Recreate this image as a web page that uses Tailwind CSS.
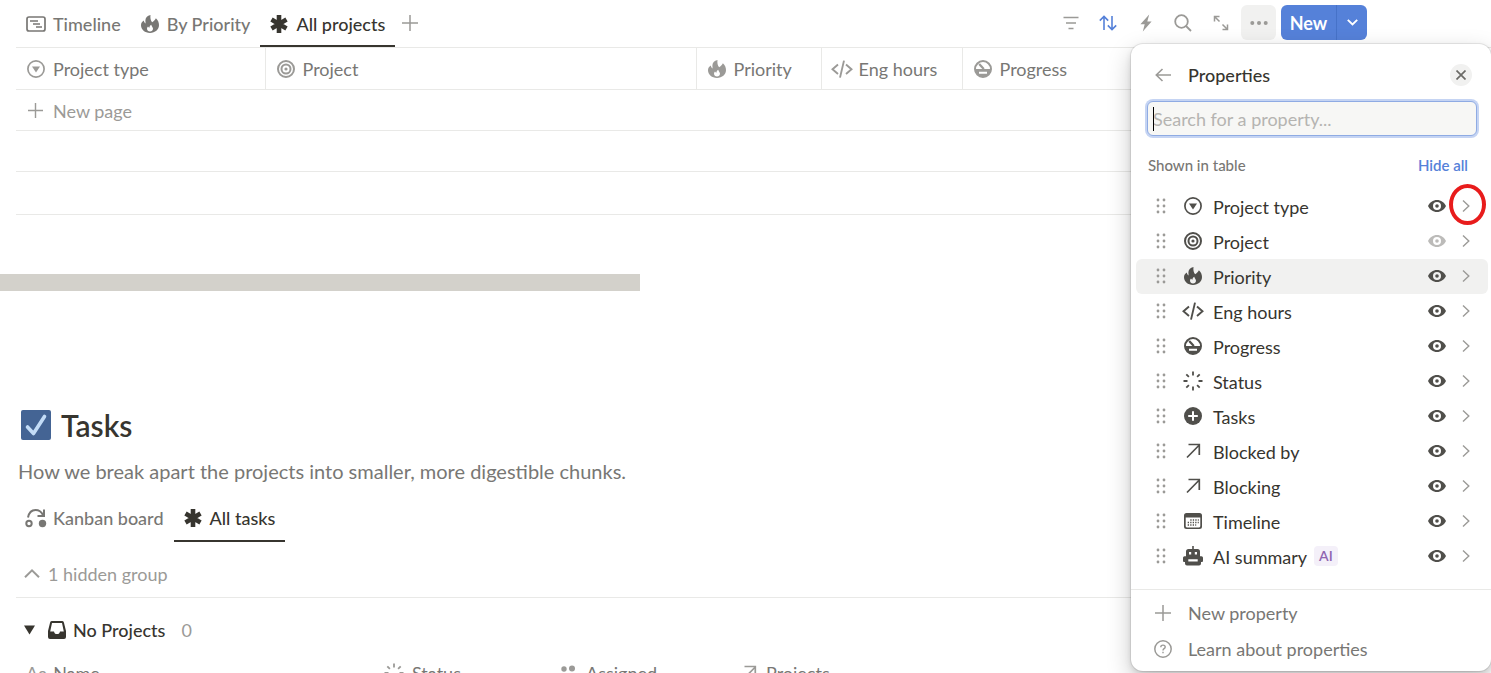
<!DOCTYPE html>
<html lang="en">
<head>
  <meta charset="UTF-8">
  <meta name="viewport" content="width=device-width, initial-scale=1.0">
  <title>Projects &amp; Tasks</title>
  <script src="https://cdn.jsdelivr.net/npm/@tailwindcss/browser@4"></script>
</head>
<body class="h-screen overflow-hidden bg-white font-['Lato',sans-serif] text-lg leading-6 text-[#37352f]">

  <!-- Icon set -->
  <svg class="hidden" aria-hidden="true">
    <symbol id="i-board" viewBox="0 0 20 18"><rect x="1" y="2" width="18" height="14" rx="2" fill="none" stroke="currentColor" stroke-width="1.700"/><path d="M4 6h8M7 9h7M10 12h6" fill="none" stroke="currentColor" stroke-width="1.400"/></symbol>
    <symbol id="i-fire" viewBox="0 0 18 18"><path fill="currentColor" fill-rule="evenodd" d="M9.500 0C6.200.6 4.300 2.800 4.400 5.600L4.600 8.600C3.600 8 3 7 2.800 5.600 1 6.700 0 8.300 0 10.300 0 14.700 3.900 18 9 18s9-3.300 9-7.900c0-2.800-1.100-5.200-3.100-6.900C14 4.800 12.700 6.300 11.100 7.200 9.600 5.300 9.100 2.700 9.500 0zM9 16.500c-1.700 0-3-1.100-3-2.700 0-1 .4-1.700 1-2.300.3.700.8 1.100 1.400 1.300.1-1.500.7-2.600 1.900-3.100.1 1.600 1.700 2.300 1.700 4.100 0 1.600-1.300 2.700-3 2.700z"/></symbol>
    <symbol id="i-asterisk" viewBox="0 0 18 18"><path d="M9 0v18M1.500 4.600l15 8.800M16.500 4.600l-15 8.800" fill="none" stroke="currentColor" stroke-width="4.600"/></symbol>
    <symbol id="i-plus" viewBox="0 0 18 18"><path d="M9 0v18M0 9h18" fill="none" stroke="currentColor" stroke-width="1.700"/></symbol>
    <symbol id="i-select" viewBox="0 0 18 18"><circle cx="9" cy="9" r="8.100" fill="none" stroke="currentColor" stroke-width="1.700"/><path d="M5 6.600h8L9 12.600z" fill="currentColor"/></symbol>
    <symbol id="i-target" viewBox="0 0 18 18"><g fill="none" stroke="currentColor" stroke-width="2"><circle cx="9" cy="9" r="8"/><circle cx="9" cy="9" r="4.500"/></g><circle cx="9" cy="9" r="1.600" fill="currentColor"/></symbol>
    <symbol id="i-code" viewBox="0 0 22 18"><path d="M7 4.500L1.500 9.300 7 14M15 4.500l5.500 4.800L15 14M13 .6L9 17.600" fill="none" stroke="currentColor" stroke-width="1.900"/></symbol>
    <symbol id="i-gauge" viewBox="0 0 18 18"><path fill="currentColor" fill-rule="evenodd" d="M9 0a9 9 0 1 0 0 18A9 9 0 0 0 9 0zM2 9.100a7 7 0 0 1 14 0zM5 11.800h8v2H5z"/><path d="M5.200 4l4.600 5.100" stroke="currentColor" stroke-width="2.200"/></symbol>
    <symbol id="i-status" viewBox="0 0 20 20"><path d="M10 .5v4M10 15.500v4M.5 10h4M15.500 10h4M3.300 3.300l2.600 2.600M14.100 14.100l2.600 2.600M16.700 3.300l-2.600 2.600M5.900 14.100l-2.600 2.600" fill="none" stroke="currentColor" stroke-width="1.800"/></symbol>
    <symbol id="i-add" viewBox="0 0 18 18"><circle cx="9" cy="9" r="9" fill="currentColor"/><path d="M9 4.200v9.600M4.200 9h9.600" stroke="white" stroke-width="2"/></symbol>
    <symbol id="i-arrow" viewBox="0 0 18 18"><path d="M3 15.500L14.800 3.500M4.500 2.500h10.800V13" fill="none" stroke="currentColor" stroke-width="1.700"/></symbol>
    <symbol id="i-calendar" viewBox="0 0 18 18"><path fill="currentColor" fill-rule="evenodd" d="M2.500 1h13A2.500 2.500 0 0 1 18 3.500v11a2.500 2.500 0 0 1-2.500 2.500h-13A2.500 2.500 0 0 1 0 14.500v-11A2.500 2.500 0 0 1 2.500 1zM1.700 5.600v8.400c0 .9.500 1.400 1.300 1.400h12c.8 0 1.300-.5 1.300-1.400V5.600z"/><path d="M6.300 8h8.500M3.700 10.500h11.100M3.700 13h8.500" stroke="currentColor" stroke-width="1.300" stroke-dasharray="1.300 1.200"/></symbol>
    <symbol id="i-robot" viewBox="0 0 20 20"><path fill="currentColor" fill-rule="evenodd" d="M9.200 0h1.600v3h3.700A2.500 2.500 0 0 1 17 5.500V10.300h1.500A1.500 1.500 0 0 1 20 11.800V15a1 1 0 0 1-1 1h-1v1.500a2 2 0 0 1-2 2H4a2 2 0 0 1-2-2V16H1a1 1 0 0 1-1-1v-3.200a1.500 1.500 0 0 1 1.500-1.500H3V5.500A2.500 2.500 0 0 1 5.500 3h3.700zM6 6v2.400h2.200V6zM11.800 6v2.400H14V6zM5.300 13.200v2.400h9.400v-2.400z"/></symbol>
    <symbol id="i-grip" viewBox="0 0 10 16"><g fill="currentColor"><circle cx="2" cy="2" r="1.400"/><circle cx="8" cy="2" r="1.400"/><circle cx="2" cy="8" r="1.400"/><circle cx="8" cy="8" r="1.400"/><circle cx="2" cy="14" r="1.400"/><circle cx="8" cy="14" r="1.400"/></g></symbol>
    <symbol id="i-eye" viewBox="0 0 18 12"><path fill="currentColor" fill-rule="evenodd" d="M9 0c4 0 7.300 2.400 9 6-1.700 3.600-5 6-9 6S1.700 9.600 0 6c1.700-3.600 5-6 9-6zm0 2a4 4 0 1 0 0 8 4 4 0 0 0 0-8z"/><circle cx="9" cy="6" r="1.800" fill="currentColor"/></symbol>
    <symbol id="i-chevron" viewBox="0 0 8 12"><path d="M1 .6L6.800 6 1 11.400" fill="none" stroke="currentColor" stroke-width="1.400"/></symbol>
    <symbol id="i-kanban" viewBox="0 0 22 20"><g fill="none" stroke="currentColor" stroke-width="2"><circle cx="4" cy="15.500" r="2.700"/><path d="M3 9.500C4 4.500 7 2 10.500 2c3.500 0 6 1.800 7.500 5M19 1.500V8h-6.500"/></g><circle cx="17.500" cy="15.500" r="3.700" fill="currentColor"/></symbol>
    <symbol id="i-inbox" viewBox="0 0 18 18"><path fill="currentColor" fill-rule="evenodd" d="M4 0h10a2 2 0 0 1 1.900 1.400L18 10v6a2 2 0 0 1-2 2H2a2 2 0 0 1-2-2v-6L2.100 1.400A2 2 0 0 1 4 0zM4 2L2.200 10.400H6c.2 1.600 1.300 2.700 3 2.700s2.800-1.100 3-2.700h3.800L14 2z"/></symbol>
    <symbol id="i-people" viewBox="0 0 16 16"><g fill="currentColor"><circle cx="4" cy="4" r="2.700"/><circle cx="12" cy="3.500" r="3"/><path d="M0 13c0-3 1.600-5 4-5s3 1 4 1 1.600-1 4-1 4 2 4 5z"/></g></symbol>
  </svg>

  <main class="pl-4">
    <!-- Projects: view tabs and toolbar -->
    <div class="flex h-12 items-stretch border-b border-[#e9e9e7] pr-31">
      <nav class="flex font-medium text-[#787774]">
        <a href="#" class="flex h-[47px] items-center gap-[7px] px-[10px]"><svg class="h-[18px] w-5"><use href="#i-board"/></svg>Timeline</a>
        <a href="#" class="flex h-[47px] items-center gap-2 px-[10px]"><svg class="size-[18px]"><use href="#i-fire"/></svg>By Priority</a>
        <a href="#" class="flex h-[47px] items-center gap-2 border-b-2 border-[#37352f] px-[10px] pt-[2px] text-[#37352f]"><svg class="size-[18px]"><use href="#i-asterisk"/></svg>All projects</a>
        <button class="flex h-[45px] items-center pl-[7px] text-[#9b9a97]" aria-label="Add view"><svg class="size-4"><use href="#i-plus"/></svg></button>
      </nav>
      <div class="ml-auto flex h-[45px] items-center text-[#9b9a97]">
        <button class="mr-5 flex" aria-label="Filter"><svg class="size-4" viewBox="0 0 16 16" fill="none" stroke="currentColor" stroke-width="1.700"><path d="M.5 2.500h15M3 8h10M5.500 13.500h5"/></svg></button>
        <button class="mr-[23px] flex text-[#5581d9]" aria-label="Sort"><svg class="h-4 w-[18px]" viewBox="0 0 18 16" fill="none" stroke="currentColor" stroke-width="1.600"><path d="M5 15V1.500M.8 5.600L5 1.400l4.200 4.200M13 1v13.500M8.800 10.400L13 14.600l4.200-4.200"/></svg></button>
        <button class="mr-[22px] flex" aria-label="Automations"><svg class="h-[18px] w-3" viewBox="0 0 12 18" fill="currentColor"><path d="M9.200.5L.4 10.300h4.300L2.800 17.500 11.600 7.500H7.300z"/></svg></button>
        <button class="mr-[21px] flex" aria-label="Search"><svg class="size-[18px]" viewBox="0 0 18 18" fill="none" stroke="currentColor" stroke-width="1.800"><circle cx="7.500" cy="7.500" r="6.300"/><path d="M12 12l5 5"/></svg></button>
        <button class="mr-3 flex" aria-label="Expand"><svg class="size-4" viewBox="0 0 16 16" fill="none" stroke="currentColor" stroke-width="1.500"><path d="M1.500 6.500v-5h5M1.500 1.500L6.500 6.500M14.500 9.500v5h-5M14.500 14.500L9.500 9.500"/></svg></button>
        <button class="mr-[5px] flex size-[35px] items-center justify-center rounded-md bg-[#f1f1f0]" aria-label="More"><svg class="h-1 w-[18px]" viewBox="0 0 18 4" fill="currentColor"><circle cx="2.300" cy="2" r="2"/><circle cx="9" cy="2" r="2"/><circle cx="15.700" cy="2" r="2"/></svg></button>
        <div class="flex h-[35px] overflow-hidden rounded-md bg-[#5581d9] font-bold text-white">
          <button class="w-14 border-r border-[#4672c8]">New</button>
          <button class="flex w-[30px] items-center justify-center" aria-label="New options"><svg class="h-[7px] w-[11px]" viewBox="0 0 11 7" fill="none" stroke="currentColor" stroke-width="1.900"><path d="M.8.8l4.700 4.700L10.200.8"/></svg></button>
        </div>
      </div>
    </div>

    <table class="w-full table-fixed border-collapse text-left text-[#787774]">
      <thead>
        <tr class="h-[41px] border-b border-[#e9e9e7]">
          <th class="w-[249px] border-r border-[#e9e9e7] pt-[2px] pl-[11px] font-normal"><div class="flex items-center gap-2"><svg class="size-[18px] text-[#9b9a97]"><use href="#i-select"/></svg>Project type</div></th>
          <th class="w-[431px] border-r border-[#e9e9e7] pt-[2px] pl-[11px] font-normal"><div class="flex items-center gap-2"><svg class="size-[18px] text-[#9b9a97]"><use href="#i-target"/></svg>Project</div></th>
          <th class="w-[125px] border-r border-[#e9e9e7] pt-[2px] pl-[11px] font-normal"><div class="flex items-center gap-2"><svg class="size-[18px] text-[#9b9a97]"><use href="#i-fire"/></svg>Priority</div></th>
          <th class="w-[141px] border-r border-[#e9e9e7] pt-[2px] pl-[9px] font-normal"><div class="flex items-center gap-[6px]"><svg class="h-[18px] w-[22px] text-[#9b9a97]"><use href="#i-code"/></svg>Eng hours</div></th>
          <th class="pt-[2px] pl-[11px] font-normal"><div class="flex items-center gap-2"><svg class="size-[18px] text-[#9b9a97]"><use href="#i-gauge"/></svg>Progress</div></th>
        </tr>
      </thead>
      <tbody>
        <tr class="h-[41px] border-b border-[#e9e9e7]"><td colspan="5" class="pt-[2px] pl-3"><button class="flex items-center gap-[10px] text-[#9b9a97]"><svg class="size-[15px]"><use href="#i-plus"/></svg>New page</button></td></tr>
        <tr class="h-[41px] border-b border-[#e9e9e7]"><td colspan="5"></td></tr>
        <tr class="h-[43px] border-b border-[#e9e9e7]"><td colspan="5"></td></tr>
      </tbody>
    </table>

    <!-- Horizontal scroll thumb -->
    <div class="mt-[59px] -ml-4 h-[17px] w-[640px] bg-[#d3d1cb]"></div>

    <!-- Tasks -->
    <section class="mt-[116px]">
      <h2 class="flex items-center gap-[10px] pl-[5px] text-[30px] leading-9 font-semibold">
        <svg class="size-[30px]" viewBox="0 0 30 30"><rect width="30" height="30" rx="2" fill="#446494"/><path d="M6.500 17l6 6.500L23.500 6.500" fill="none" stroke="#c3dcf7" stroke-width="3.600" stroke-linecap="round" stroke-linejoin="round"/></svg>
        Tasks
      </h2>
      <p class="mt-4 pl-[2px] text-xl leading-6 text-[#787774]">How we break apart the projects into smaller, more digestible chunks.</p>

      <nav class="mt-3 flex font-medium text-[#787774]">
        <a href="#" class="flex h-[47px] items-center gap-[6px] pr-[10px] pl-[9px]"><svg class="h-5 w-[22px]"><use href="#i-kanban"/></svg>Kanban board</a>
        <a href="#" class="flex h-[47px] items-center gap-2 border-b-2 border-[#37352f] px-[10px] pt-[2px] text-[#37352f]"><svg class="size-[18px]"><use href="#i-asterisk"/></svg>All tasks</a>
      </nav>

      <button class="mt-5 flex items-center gap-2 pl-2 text-[#9b9a97]"><svg class="h-[9px] w-4" viewBox="0 0 16 9" fill="none" stroke="currentColor" stroke-width="2"><path d="M1 8.200L8 1.400l7 6.800"/></svg>1 hidden group</button>

      <div class="mt-[11px] flex items-center border-t border-[#e9e9e7] pt-5 pl-2">
        <button class="mr-[13px] flex" aria-label="Collapse group"><svg class="h-[10px] w-[11px]" viewBox="0 0 11 10"><path d="M0 .5h11L5.500 9.500z" fill="currentColor"/></svg></button>
        <svg class="mr-[7px] size-[18px]"><use href="#i-inbox"/></svg>
        <span class="font-medium">No Projects</span>
        <span class="ml-4 text-[#9b9a97]">0</span>
      </div>

      <table class="mt-[11px] w-full table-fixed text-left text-[#787774]">
        <thead>
          <tr class="h-[41px]">
            <th class="w-[358px] pl-[10px] font-normal"><div class="flex items-center gap-[6px]"><span class="text-[#9b9a97]">Aa</span>Name</div></th>
            <th class="w-[175px] pl-[10px] font-normal"><div class="flex items-center gap-2"><svg class="size-5 text-[#9b9a97]"><use href="#i-status"/></svg>Status</div></th>
            <th class="w-[182px] pl-[11px] font-normal"><div class="flex items-center gap-[10px]"><svg class="size-4 text-[#9b9a97]"><use href="#i-people"/></svg>Assigned</div></th>
            <th class="pl-[9px] font-normal"><div class="flex items-center gap-2"><svg class="size-[18px] text-[#9b9a97]"><use href="#i-arrow"/></svg>Projects</div></th>
          </tr>
        </thead>
      </table>
    </section>
  </main>

  <!-- Properties menu -->
  <aside class="absolute top-11 right-0 w-[360px] rounded-xl bg-white shadow-[0_0_0_1px_rgba(15,15,15,0.08),0_3px_6px_rgba(15,15,15,0.12),0_9px_24px_rgba(15,15,15,0.22)]">
    <header class="flex items-center pt-[19px] pr-[19px] pl-6">
      <button class="flex text-[#9b9a97]" aria-label="Back"><svg class="h-[14px] w-4" viewBox="0 0 16 14" fill="none" stroke="currentColor" stroke-width="1.600"><path d="M16 7H1.500M7.500 1L1.300 7l6.200 6"/></svg></button>
      <h3 class="ml-[17px] font-medium">Properties</h3>
      <button class="ml-auto flex size-[22px] items-center justify-center rounded-full bg-[#f1f1f0] text-[#6b6a66]" aria-label="Close"><svg class="size-[10px]" viewBox="0 0 10 10" fill="none" stroke="currentColor" stroke-width="1.700"><path d="M.5.500l9 9M9.500.500l-9 9"/></svg></button>
    </header>
    <div class="relative mr-[14px] ml-4 mt-[14px]">
      <input type="text" aria-label="Search for a property" placeholder="Search for a property..." class="h-[35px] w-full rounded-md border border-[#8fabe3] bg-[#f7f7f5] px-[5px] shadow-[0_0_0_2px_#c5d4f3] outline-none placeholder:text-[#b5b4b1]">
      <span class="absolute top-[6px] left-[6px] h-6 w-px bg-black"></span>
    </div>
    <div class="mt-[17px] flex items-center justify-between pr-[23px] pl-[17px] text-[15px] font-medium text-[#787774]">
      <span>Shown in table</span>
      <button class="font-semibold text-[#5581d9]">Hide all</button>
    </div>
    <ul id="properties" class="mt-3 pr-[3px] pl-[5px]"></ul>
    <footer class="mt-[15px] border-t border-[#e9e9e7] pt-[5px] pb-1 pl-6 text-[#787774]">
      <button class="flex h-9 items-center gap-[17px]"><svg class="size-4 text-[#9b9a97]"><use href="#i-plus"/></svg>New property</button>
      <a href="#" class="-ml-px flex h-9 items-center gap-4"><svg class="size-[18px] text-[#9b9a97]" viewBox="0 0 18 18" fill="none" stroke="currentColor"><circle cx="9" cy="9" r="8.200" stroke-width="1.500"/><path d="M6.800 7.200c0-1.300.9-2.100 2.200-2.100s2.200.8 2.200 1.900c0 1.700-2.200 1.600-2.200 3.400M9 11.700v1.500" stroke-width="1.400"/></svg>Learn about properties</a>
    </footer>
    <!-- Red marker around the first row's arrow -->
    <div class="absolute top-[140px] left-[318px] h-[41px] w-[37px] rounded-[50%] border-4 border-[#e81c1c]"></div>
  </aside>

  <script>
    const properties = [
      { name: 'Project type', icon: 'select' },
      { name: 'Project', icon: 'target', locked: true },
      { name: 'Priority', icon: 'fire', active: true },
      { name: 'Eng hours', icon: 'code' },
      { name: 'Progress', icon: 'gauge' },
      { name: 'Status', icon: 'status' },
      { name: 'Tasks', icon: 'add' },
      { name: 'Blocked by', icon: 'arrow' },
      { name: 'Blocking', icon: 'arrow' },
      { name: 'Timeline', icon: 'calendar' },
      { name: 'AI summary', icon: 'robot', ai: true },
    ];
    const wide = { code: 'h-[18px] w-[22px]', status: 'size-5', robot: 'size-5' };

    document.getElementById('properties').innerHTML = properties.map(p => `
      <li class="flex h-[35px] items-center rounded-md pr-[18px] pb-px pl-5 ${p.active ? 'bg-[#f1f1f0]' : ''}">
        <svg class="h-4 w-[10px] text-[#9b9a97]"><use href="#i-grip"/></svg>
        <span class="ml-4 flex w-[22px] justify-center text-[#504f4b]"><svg class="${wide[p.icon] || 'size-[18px]'}"><use href="#i-${p.icon}"/></svg></span>
        <span class="ml-[9px] pt-[2px]">${p.name}</span>
        ${p.ai ? '<span class="ml-[7px] rounded bg-[#f4f0f9] px-[5px] text-sm leading-5 font-semibold text-[#9065b0]">AI</span>' : ''}
        <button class="ml-auto flex ${p.locked ? 'text-[#bcbbb9]' : 'text-[#504f4b]'}" aria-label="Toggle ${p.name}"><svg class="h-3 w-[18px]"><use href="#i-eye"/></svg></button>
        <button class="ml-4 flex text-[#9b9a97]" aria-label="Edit ${p.name}"><svg class="h-3 w-2"><use href="#i-chevron"/></svg></button>
      </li>`).join('');
  </script>
</body>
</html>
